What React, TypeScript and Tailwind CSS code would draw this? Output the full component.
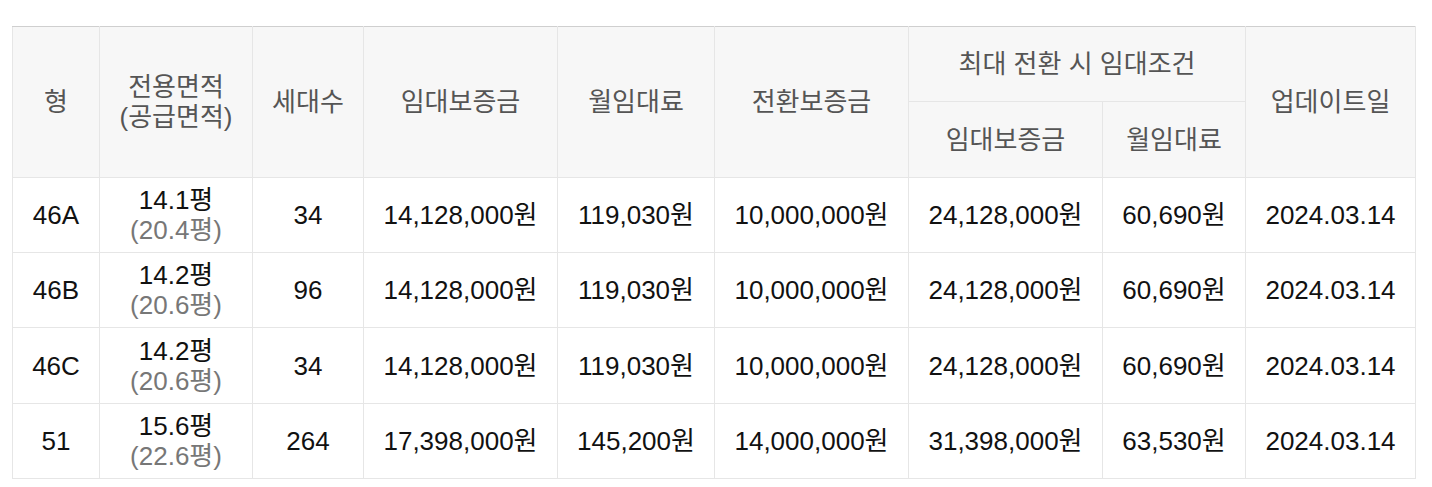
import React from "react";

const rows = [
  ["46A", "14.1평", "(20.4평)", "34", "14,128,000원", "119,030원", "10,000,000원", "24,128,000원", "60,690원", "2024.03.14"],
  ["46B", "14.2평", "(20.6평)", "96", "14,128,000원", "119,030원", "10,000,000원", "24,128,000원", "60,690원", "2024.03.14"],
  ["46C", "14.2평", "(20.6평)", "34", "14,128,000원", "119,030원", "10,000,000원", "24,128,000원", "60,690원", "2024.03.14"],
  ["51", "15.6평", "(22.6평)", "264", "17,398,000원", "145,200원", "14,000,000원", "31,398,000원", "63,530원", "2024.03.14"],
];

const th = "border border-[#e6e6e6] bg-[#f7f7f7] font-normal text-[#555] text-center align-middle p-0";
const td = "border border-[#e6e6e6] text-[#111] text-center align-middle p-0";

export default function App() {
  return (
    <div
      className="w-[1432px] h-[487px] bg-white pt-[26px] pl-[12px]"
      style={{ fontFamily: '"Liberation Sans", "Noto Sans CJK KR", sans-serif' }}
    >
      <table className="border-collapse table-fixed w-[1403px] text-[26px] leading-[30px] border-t border-t-[#cfcfcf]">
        <colgroup>
          <col className="w-[87px]" />
          <col className="w-[153px]" />
          <col className="w-[111px]" />
          <col className="w-[194px]" />
          <col className="w-[157px]" />
          <col className="w-[194px]" />
          <col className="w-[194px]" />
          <col className="w-[143px]" />
          <col className="w-[170px]" />
        </colgroup>
        <thead>
          <tr className="h-[75px]">
            <th rowSpan={2} className={th + " border-t-[#cfcfcf]"}>형</th>
            <th rowSpan={2} className={th + " border-t-[#cfcfcf]"}>
              전용면적
              <br />
              (공급면적)
            </th>
            <th rowSpan={2} className={th + " border-t-[#cfcfcf]"}>세대수</th>
            <th rowSpan={2} className={th + " border-t-[#cfcfcf]"}>임대보증금</th>
            <th rowSpan={2} className={th + " border-t-[#cfcfcf]"}>월임대료</th>
            <th rowSpan={2} className={th + " border-t-[#cfcfcf]"}>전환보증금</th>
            <th colSpan={2} className={th + " border-t-[#cfcfcf]"}>최대 전환 시 임대조건</th>
            <th rowSpan={2} className={th + " border-t-[#cfcfcf]"}>업데이트일</th>
          </tr>
          <tr className="h-[76px]">
            <th className={th}>임대보증금</th>
            <th className={th}>월임대료</th>
          </tr>
        </thead>
        <tbody>
          {rows.map((r, i) => (
            <tr key={i} className={i === 2 ? "h-[76px]" : "h-[75px]"}>
              <td className={td}>{r[0]}</td>
              <td className={td}>
                <div>{r[1]}</div>
                <div className="text-[#777]">{r[2]}</div>
              </td>
              <td className={td}>{r[3]}</td>
              <td className={td}>{r[4]}</td>
              <td className={td}>{r[5]}</td>
              <td className={td}>{r[6]}</td>
              <td className={td}>{r[7]}</td>
              <td className={td}>{r[8]}</td>
              <td className={td}>{r[9]}</td>
            </tr>
          ))}
        </tbody>
      </table>
    </div>
  );
}
